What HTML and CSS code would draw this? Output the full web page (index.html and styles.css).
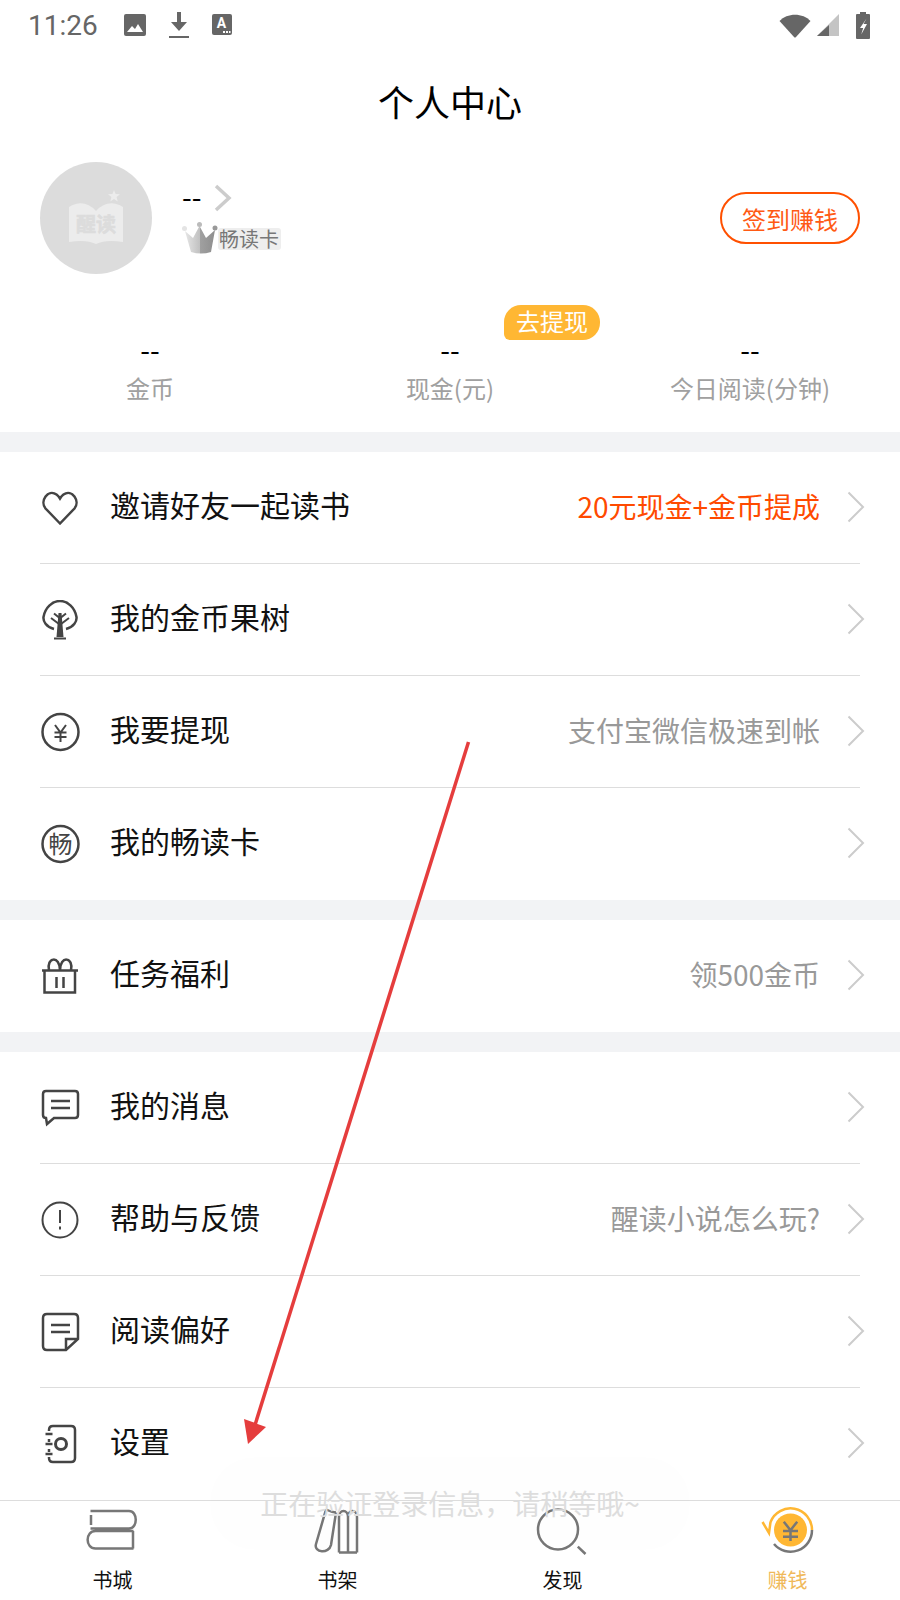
FILE: index.html
```html
<!DOCTYPE html>
<html lang="zh-CN">
<head>
    <meta charset="UTF-8">
    <meta name="viewport" content="width=device-width, initial-scale=1.0">
    <title>个人中心</title>
    <link rel="stylesheet" href="styles.css">
</head>
<body>
    <div class="page">
        <!-- 状态栏 -->
        <div class="status-bar">
            <span class="time">11:26</span>
            <svg class="st-icon st-image" width="24" height="24" viewBox="0 0 24 24"><rect x="1" y="1" width="22" height="22" rx="2" fill="#666"/><path d="M4 19l5-6 3 3 3-5 5 8z" fill="#fff"/></svg>
            <svg class="st-icon st-down" width="22" height="28" viewBox="0 0 22 28"><path d="M9 1h4v10h6l-8 9-8-9h6z" fill="#666"/><rect x="1" y="25" width="20" height="2" fill="#666"/></svg>
            <svg class="st-icon st-a" width="20" height="22" viewBox="0 0 20 22"><rect width="20" height="21" rx="2" fill="#666"/><text x="9.5" y="14" class="st-a-text">A</text><path d="M11 17h2v2h-2zM14 17h2v2h-2zM17 17h1.500v2H17z" fill="#fff"/></svg>
            <span class="spacer"></span>
            <svg class="st-icon" width="32" height="26" viewBox="0 0 32 26"><path d="M.5 9C8 .5 24 .5 31.500 9L17 25q-1 1-2 0z" fill="#666"/></svg>
            <svg class="st-icon st-signal" width="23" height="23" viewBox="0 0 23 23"><path d="M22 0v22H0z" fill="#c4c4c4"/><path d="M12 11v11H0z" fill="#666"/></svg>
            <svg class="st-icon st-battery" width="14" height="27" viewBox="0 0 14 27"><path d="M4 0h6v2h3q1 0 1 1v23q0 1-1 1H1q-1 0-1-1V3q0-1 1-1h3z" fill="#666"/><path d="M10.500 6.500L4 16h3.200l-2 6.500L11 12H7.500z" fill="#fff"/></svg>
        </div>

        <div class="title">个人中心</div>

        <!-- 用户信息 -->
        <div class="profile">
            <div class="avatar">
                <svg width="112" height="112" viewBox="0 0 112 112">
                    <path d="M29 45Q44 36 56 49Q68 36 83 45V80Q66 77 56 82Q46 77 29 80z" fill="#ececec"/>
                    <path d="M74 28l1.600 4 4.400.3-3.400 2.800 1.100 4.300-3.700-2.300-3.700 2.300 1.100-4.300-3.400-2.800 4.400-.3z" fill="#ececec"/>
                    <text x="56" y="70" class="avatar-text">醒读</text>
                </svg>
            </div>
            <div class="profile-info">
                <div class="name-row">
                    <span class="name">--</span>
                    <svg class="name-arrow" width="18" height="28" viewBox="0 0 18 28"><path d="M2 2l13 12L2 26" fill="none" stroke="#ccc" stroke-width="3.500"/></svg>
                </div>
                <div class="vip-row">
                    <svg class="crown" width="36" height="32" viewBox="0 0 36 32">
                        <defs><linearGradient id="crownFill" x1="0" x2="1" y1="0" y2="0"><stop offset="0" stop-color="#e6e6e6"/><stop offset=".5" stop-color="#c0c0c0"/><stop offset=".51" stop-color="#a0a0a0"/><stop offset="1" stop-color="#8e8e8e"/></linearGradient></defs>
                        <path d="M3 9l8 7 6.500-12L24 16l9-8-4 22q-10 3-20 0z" fill="url(#crownFill)"/>
                        <circle cx="2.500" cy="6.500" r="2.500" fill="#e4e4e4"/>
                        <circle cx="17.500" cy="2.500" r="2.500" fill="#bbb"/>
                        <circle cx="33" cy="6" r="2.500" fill="#999"/>
                    </svg>
                    <span class="vip-chip">畅读卡</span>
                </div>
            </div>
            <button class="sign-btn">签到赚钱</button>
        </div>

        <!-- 统计 -->
        <div class="stats">
            <div class="stat"><div class="stat-value">--</div><div class="stat-label">金币</div></div>
            <div class="stat"><div class="stat-value">--</div><div class="stat-label">现金(元)</div></div>
            <div class="stat"><div class="stat-value">--</div><div class="stat-label">今日阅读(分钟)</div></div>
            <span class="withdraw-tag">去提现</span>
        </div>

        <div class="band"></div>

        <div class="group">
            <div class="row">
                <svg class="row-icon" width="40" height="40" viewBox="0 0 40 40"><path d="M20 35.500L5.500 20.500C-.500 13 8 .500 16.500 6.500Q18.500 8 20 10.500Q21.500 8 23.500 6.500C32 .500 40.500 13 34.500 20.500z"/></svg>
                <span class="row-label">邀请好友一起读书</span>
                <span class="row-note orange">20元现金+金币提成</span>
                <svg class="chevron" width="18" height="32" viewBox="0 0 18 32"><path d="M1.500 1.500L16 16 1.500 30.500"/></svg>
            </div>
            <div class="row">
                <svg class="row-icon" width="40" height="40" viewBox="0 0 40 40"><path d="M14 29C6 27 3 21 3.500 17C5 8 12 1 20 1C28 1 35 8 36.500 17C37 21 34 27 26 29"/><path d="M16.500 37L18.500 13h3l2 24z" fill="#444" stroke="none"/><path d="M14 38.500h12M11 18l8 6M29 18l-8 6M14 13.500l5 4M26 13.500l-5 4" stroke-width="2"/></svg>
                <span class="row-label">我的金币果树</span>
                <svg class="chevron" width="18" height="32" viewBox="0 0 18 32"><path d="M1.500 1.500L16 16 1.500 30.500"/></svg>
            </div>
            <div class="row">
                <svg class="row-icon" width="40" height="40" viewBox="0 0 40 40"><circle cx="20.500" cy="20" r="18"/><path d="M15 13l5.500 7.500 5.500-7.500M14.500 20.500h12M14.500 25h12M20.500 20.500V30" stroke-width="2"/></svg>
                <span class="row-label">我要提现</span>
                <span class="row-note">支付宝微信极速到帐</span>
                <svg class="chevron" width="18" height="32" viewBox="0 0 18 32"><path d="M1.500 1.500L16 16 1.500 30.500"/></svg>
            </div>
            <div class="row no-line">
                <svg class="row-icon" width="40" height="40" viewBox="0 0 40 40"><circle cx="20.500" cy="20" r="18"/><text x="20.500" y="28.500" class="icon-char">畅</text></svg>
                <span class="row-label">我的畅读卡</span>
                <svg class="chevron" width="18" height="32" viewBox="0 0 18 32"><path d="M1.500 1.500L16 16 1.500 30.500"/></svg>
            </div>
        </div>

        <div class="band"></div>

        <div class="group">
            <div class="row no-line">
                <svg class="row-icon" width="40" height="40" viewBox="0 0 40 40"><path d="M2 14.500h36M4.500 14.500v22h30.500v-22M16.500 21v11M23.500 21v11M9 14.500C6 1 20-1 20 14.500C20-1 34 1 31 14.500"/></svg>
                <span class="row-label">任务福利</span>
                <span class="row-note">领500金币</span>
                <svg class="chevron" width="18" height="32" viewBox="0 0 18 32"><path d="M1.500 1.500L16 16 1.500 30.500"/></svg>
            </div>
        </div>

        <div class="band"></div>

        <div class="group">
            <div class="row">
                <svg class="row-icon" width="40" height="40" viewBox="0 0 40 40"><path d="M6 3h29q3 0 3 3v21q0 3-3 3H14l-7 6-1-6q-3 0-3-3V6q0-3 3-3z"/><path d="M11 13h19M11 20h19"/></svg>
                <span class="row-label">我的消息</span>
                <svg class="chevron" width="18" height="32" viewBox="0 0 18 32"><path d="M1.500 1.500L16 16 1.500 30.500"/></svg>
            </div>
            <div class="row">
                <svg class="row-icon thin" width="40" height="40" viewBox="0 0 40 40"><circle cx="20" cy="20" r="17.500"/><path d="M20 10v13M20 26.500v3"/></svg>
                <span class="row-label">帮助与反馈</span>
                <span class="row-note">醒读小说怎么玩?</span>
                <svg class="chevron" width="18" height="32" viewBox="0 0 18 32"><path d="M1.500 1.500L16 16 1.500 30.500"/></svg>
            </div>
            <div class="row">
                <svg class="row-icon" width="40" height="40" viewBox="0 0 40 40"><path d="M26 38H7q-4 0-4-4V6q0-4 4-4h27q4 0 4 4v21L26 38zM26 38V27h12"/><path d="M11 13h19M11 20h19"/></svg>
                <span class="row-label">阅读偏好</span>
                <svg class="chevron" width="18" height="32" viewBox="0 0 18 32"><path d="M1.500 1.500L16 16 1.500 30.500"/></svg>
            </div>
            <div class="row no-line">
                <svg class="row-icon" width="40" height="40" viewBox="0 0 40 40"><path d="M9 7V6q0-4 4-4h18q4 0 4 4v28q0 4-4 4H13q-4 0-4-4v-1M9 15v3M9 25v3M5.500 10h7M5.500 20h7M5.500 30h7"/><circle cx="21" cy="20" r="5.500" stroke-width="3"/></svg>
                <span class="row-label">设置</span>
                <svg class="chevron" width="18" height="32" viewBox="0 0 18 32"><path d="M1.500 1.500L16 16 1.500 30.500"/></svg>
            </div>
        </div>

        <!-- 底部导航 -->
        <div class="tabbar">
            <div class="tab">
                <svg class="tab-icon" width="60" height="48" viewBox="0 0 60 48"><path d="M7.500 3H46c9 0 9 17.500 0 17.500H7.500M8 7v10M50.500 23H12.500c-10.500 0-10.500 17.500 0 17.500h38M50 23v17.500"/></svg>
                <span>书城</span>
            </div>
            <div class="tab">
                <svg class="tab-icon" width="60" height="48" viewBox="0 0 60 48"><path d="M18 1.500Q23 4 28 4.500M18 1.500L8 36C5.500 45 21 46 23 37L28 4.500M31 44.500V9c0-8 9-8 9 0v35.500M40 9c0-8 9-8 9 0v35.500M31 44.500h18"/></svg>
                <span>书架</span>
            </div>
            <div class="tab">
                <svg class="tab-icon" width="60" height="48" viewBox="0 0 60 48"><circle cx="25" cy="21.500" r="20"/><path d="M44.800 38.700l7.700 7.300"/></svg>
                <span>发现</span>
            </div>
            <div class="tab active">
                <svg class="tab-icon" width="60" height="48" viewBox="0 0 60 48">
                    <circle cx="32.500" cy="22" r="16.500" fill="#ffb733" stroke="none"/>
                    <path d="M12.500 14A21.500 21.500 0 0 1 54 22M4.500 14L11 25L12.500 14" stroke="#ffb733"/>
                    <path d="M54 22A21.500 21.500 0 0 1 16 36"/>
                    <path d="M25.800 13.700l6.700 8.500 6.700-8.500M25 23h15M25 28.700h15M32.500 22.200V33"/>
                </svg>
                <span>赚钱</span>
            </div>
        </div>

        <!-- 提示 -->
        <div class="toast">正在验证登录信息，请稍等哦~</div>

        <!-- 标注箭头 -->
        <svg class="arrow" width="900" height="1600" viewBox="0 0 900 1600">
            <path d="M468.500 742L255 1425" stroke="#e53d3d" stroke-width="3.500" fill="none"/>
            <path d="M244 1419l22 8-18 17z" fill="#e53d3d"/>
        </svg>
    </div>
</body>
</html>
```

FILE: styles.css
```css
body {
    margin: 0;
    background-color: white;
    font-family: "Noto Sans CJK SC", "Noto Sans", sans-serif;
    color: #111;
}
.page {
    position: relative;
    width: 900px;
    height: 1600px;
    overflow: hidden;
    display: flex;
    flex-direction: column;
}
.status-bar {
    height: 50px;
    padding: 0 30px 0 28px;
    display: flex;
    align-items: center;
    box-sizing: border-box;
}
.time {
    font-family: Roboto, sans-serif;
    font-size: 28px;
    color: #666;
    margin-right: 25px;
}
.st-icon {
    display: block;
}
.st-down {
    margin-left: 21px;
}
.st-a {
    margin-left: 22px;
}
.st-a-text {
    font-family: Roboto, sans-serif;
    font-size: 14px;
    font-weight: bold;
    fill: #fff;
    text-anchor: middle;
}
.spacer {
    flex: 1;
}
.st-signal {
    margin-left: 6px;
}
.st-battery {
    margin-left: 16px;
}
.title {
    height: 102px;
    line-height: 102px;
    padding-bottom: 6px;
    text-align: center;
    font-size: 36px;
    color: #000;
}
.profile {
    height: 120px;
    padding: 0 40px;
    display: flex;
    align-items: center;
}
.avatar {
    width: 112px;
    height: 112px;
    border-radius: 50%;
    background-color: #dcdcdc;
}
.avatar svg {
    display: block;
}
.avatar-text {
    font-size: 20px;
    font-weight: bold;
    fill: #dcdcdc;
    stroke: #dcdcdc;
    stroke-width: .6;
    text-anchor: middle;
}
.profile-info {
    margin-left: 30px;
    flex: 1;
}
.name-row {
    display: flex;
    align-items: center;
    height: 34px;
    margin-top: -2px;
}
.name {
    padding-bottom: 4px;
    font-size: 28px;
    line-height: 30px;
    color: #000;
    width: 32px;
}
.name-arrow {
    display: block;
}
.vip-row {
    margin-top: 7px;
    display: flex;
    align-items: center;
    height: 32px;
}
.crown {
    display: block;
    flex: none;
}
.vip-chip {
    margin-top: 3px;
    padding: 0 2px 0 1px;
    height: 22px;
    line-height: 22px;
    font-size: 20px;
    color: #777;
    background-color: #eee;
    border-radius: 3px;
}
.sign-btn {
    width: 140px;
    height: 52px;
    padding: 0;
    border: 2px solid #ff5000;
    border-radius: 26px;
    background-color: white;
    color: #ff5a14;
    font-family: inherit;
    font-size: 24px;
}
.stats {
    position: relative;
    height: 154px;
    display: grid;
    grid-template-columns: repeat(3, 1fr);
    text-align: center;
}
.stat {
    padding-top: 53px;
}
.stat-value {
    height: 36px;
    line-height: 36px;
    font-size: 28px;
    color: #000;
}
.stat-label {
    margin-top: 3px;
    height: 36px;
    line-height: 36px;
    font-size: 24px;
    color: #a0a0a0;
}
.withdraw-tag {
    position: absolute;
    left: 504px;
    top: 27px;
    width: 96px;
    height: 35px;
    line-height: 31px;
    text-align: center;
    font-size: 24px;
    color: white;
    background-color: #ffb733;
    border-radius: 17px 17px 17px 6px;
}
.band {
    height: 20px;
    background-color: #f2f3f5;
    flex: none;
}
.group {
    flex: none;
}
.row {
    position: relative;
    height: 112px;
    margin: 0 40px;
    display: flex;
    align-items: center;
    border-bottom: 1px solid #ddd;
    box-sizing: border-box;
}
.row.no-line {
    border-bottom: none;
}
.row-icon {
    display: block;
    flex: none;
    fill: none;
    stroke: #444;
    stroke-width: 2.500;
}
.row-icon.thin {
    stroke-width: 2;
}
.icon-char {
    font-size: 24px;
    fill: #444;
    stroke: none;
    text-anchor: middle;
}
.row-label {
    margin-left: 30px;
    padding-bottom: 8px;
    flex: 1;
    font-size: 30px;
    color: #111;
}
.row-note {
    padding-bottom: 4px;
    font-size: 28px;
    color: #999;
}
.row-note.orange {
    color: #ff4a00;
}
.chevron {
    display: block;
    flex: none;
    margin-left: 27px;
    margin-right: -5px;
    margin-bottom: 2px;
    fill: none;
    stroke: #ccc;
    stroke-width: 2;
}
.tabbar {
    flex: 1;
    display: grid;
    grid-template-columns: repeat(4, 1fr);
    border-top: 1px solid #ddd;
}
.tab {
    display: flex;
    flex-direction: column;
    align-items: center;
    font-size: 20px;
    line-height: 28px;
    color: #111;
}
.tab-icon {
    display: block;
    margin-top: 7px;
    margin-bottom: 10px;
    fill: none;
    stroke: #777;
    stroke-width: 2.500;
    overflow: visible;
}
.tab.active {
    color: #f0b95a;
}
.toast {
    position: absolute;
    left: 210px;
    width: 480px;
    top: 1457px;
    height: 93px;
    border-radius: 44px;
    background-color: rgba(0,0,0,.004);
    text-align: center;
    font-size: 28px;
    line-height: 93px;
    color: #ddd;
}
.arrow {
    position: absolute;
    left: 0;
    top: 0;
    pointer-events: none;
}
```
